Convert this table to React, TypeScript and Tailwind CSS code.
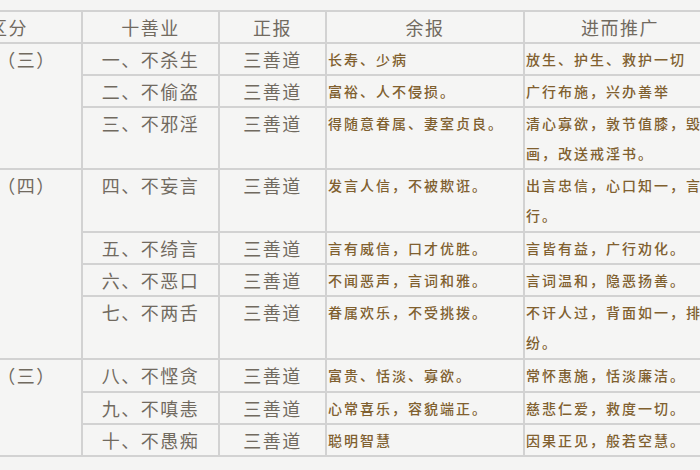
import React from 'react';

type Row = {
  name: string;
  main: string;
  rest: string;
  more: string;
};

const rows: Row[] = [
  { name: '一、不杀生', main: '三善道', rest: '长寿、少病', more: '放生、护生、救护一切' },
  { name: '二、不偷盗', main: '三善道', rest: '富裕、人不侵损。', more: '广行布施，兴办善举' },
  { name: '三、不邪淫', main: '三善道', rest: '得随意眷属、妻室贞良。', more: '清心寡欲，敦节值膝，毁画，改送戒淫书。' },
  { name: '四、不妄言', main: '三善道', rest: '发言人信，不被欺诳。', more: '出言忠信，心口知一，言行。' },
  { name: '五、不绮言', main: '三善道', rest: '言有威信，口才优胜。', more: '言皆有益，广行劝化。' },
  { name: '六、不恶口', main: '三善道', rest: '不闻恶声，言词和雅。', more: '言词温和，隐恶扬善。' },
  { name: '七、不两舌', main: '三善道', rest: '眷属欢乐，不受挑拨。', more: '不讦人过，背面如一，排纷。' },
  { name: '八、不悭贪', main: '三善道', rest: '富贵、恬淡、寡欲。', more: '常怀惠施，恬淡廉洁。' },
  { name: '九、不嗔恚', main: '三善道', rest: '心常喜乐，容貌端正。', more: '慈悲仁爱，救度一切。' },
  { name: '十、不愚痴', main: '三善道', rest: '聪明智慧', more: '因果正见，般若空慧。' },
];

// grouping column spans several rows
const groups = [
  { label: '（三）', rowClass: 'row-start-2 row-span-3' },
  { label: '（四）', rowClass: 'row-start-5 row-span-4' },
  { label: '（三）', rowClass: 'row-start-9 row-span-3' },
];

const cell = "bg-[#f5f5f4]";
const big = "text-[18px] tracking-[1.5px] leading-[30px] text-[#716a5f] text-center";
const small = "text-[14px] tracking-[2px] leading-[30px] text-[#80602f] font-medium text-left pl-[1px]";

export default function App() {
  return (
    <div
      className="w-[700px] h-[470px] overflow-hidden bg-[#f4f4f3] pt-[10px]"
      style={{ fontFamily: '"Noto Sans CJK SC", "Noto Sans", sans-serif' }}
    >
      <div className="ml-[-30px] w-[755px] grid grid-cols-[109px_135px_105px_196px_190px] grid-rows-[30px_30px_30px_60px_61px_30px_30px_61px_31px_30px_30px] gap-[2px] p-[2px] bg-[#d2d2d2]">
        {/* header */}
        <div className={`${cell} ${big} pr-[36px]`}>区分</div>
        <div className={`${cell} ${big}`}>十善业</div>
        <div className={`${cell} ${big}`}>正报</div>
        <div className={`${cell} ${big}`}>余报</div>
        <div className={`${cell} ${big}`}>进而推广</div>

        {groups.map((g, i) => (
          <div key={i} className={`col-start-1 ${g.rowClass} ${cell} ${big}`}>
            {g.label}
          </div>
        ))}

        {rows.map((r, i) => (
          <React.Fragment key={i}>
            <div className={`col-start-2 ${cell} ${big}`}>{r.name}</div>
            <div className={`col-start-3 ${cell} ${big}`}>{r.main}</div>
            <div className={`col-start-4 ${cell} ${small}`}>{r.rest}</div>
            <div className={`col-start-5 ${cell} ${small}`}>{r.more}</div>
          </React.Fragment>
        ))}
      </div>
    </div>
  );
}
